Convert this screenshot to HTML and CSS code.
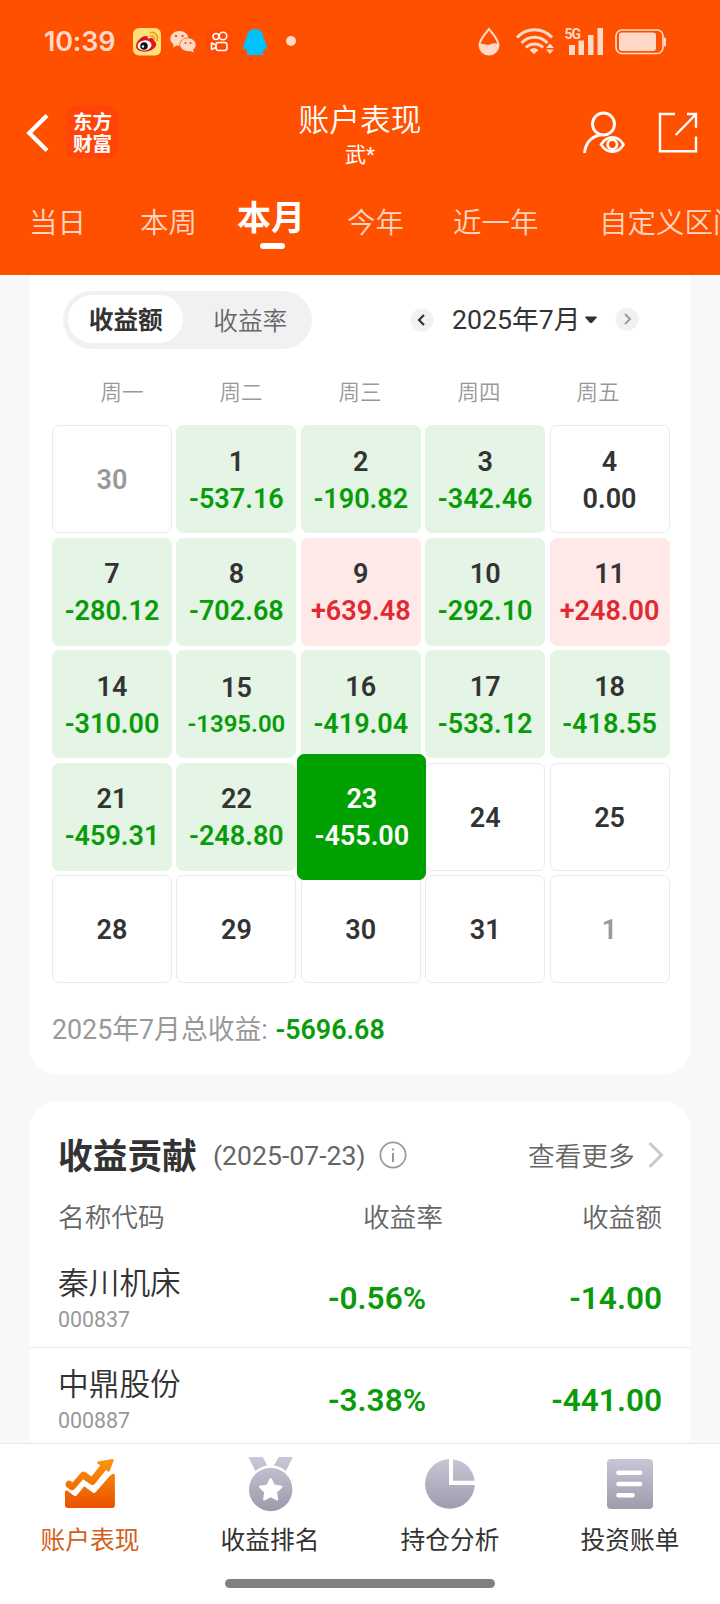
FILE: index.html
```html
<!DOCTYPE html>
<html lang="zh-CN">
<head>
<meta charset="utf-8">
<title>账户表现</title>
<link rel="stylesheet" href="styles.css">
</head>
<body>
<div class="screen">
  <header class="header">
    <div class="status">
      <span class="clock">10:39</span>
      <svg class="status-left" width="180" height="32" viewBox="130 26 180 32">
        <rect x="133" y="28" width="28" height="27.500" rx="6" fill="#ffdf78"/>
        <path d="M136 46c0-5 6-10 10-10 2 0 2 2 2 3 3-2 7-1 6 2 3 1 3 6-1 8-5 4-17 4-17-3z" fill="#e0141e"/>
        <ellipse cx="144.500" cy="45.500" rx="7" ry="5" fill="#fff" transform="rotate(-8 144 45)"/>
        <circle cx="144" cy="46" r="3.800" fill="#111"/><circle cx="143" cy="46.500" r="1.200" fill="#fff"/>
        <path d="M150.500 32.500c5-1 8 3 6.500 8M151 36c2.500-.5 3.500 1.500 3 3.500" fill="none" stroke="#f29a1c" stroke-width="1.700" stroke-linecap="round"/>
        <g fill="#ffd9c8">
          <path d="M179.500 31c5 0 8.500 3 8.700 6.600-5.200 0-9.200 3.600-8.700 8.200-1.200.1-2 0-3-.2l-3.600 2 .8-3c-2-1.500-3.400-3.300-3.400-5.800 0-4.300 4-7.800 9.200-7.800z"/>
          <path d="M188 38.300c4.500 0 7.700 3 7.700 6.500 0 2.100-1 3.600-2.600 4.900l.5 2.700-3.100-1.500c-5.600 1.200-10.400-2-10.400-6.100 0-3.600 3.400-6.500 7.900-6.500z"/>
        </g>
        <g fill="#ff5000"><circle cx="176" cy="36" r="1.200"/><circle cx="182.500" cy="36" r="1.200"/><circle cx="185.500" cy="43" r="1.100"/><circle cx="190.500" cy="43" r="1.100"/></g>
        <rect x="206" y="29" width="26" height="26" rx="6" fill="#ff4a05"/>
        <g fill="none" stroke="#fff" stroke-width="1.600" stroke-linejoin="round"><circle cx="216" cy="36.500" r="3"/><circle cx="223" cy="36" r="3.800"/><rect x="216" y="42.500" width="11" height="8" rx="2.500"/><path d="M216 45l-4.500-2v6.500l4.500-2"/></g>
        <path d="M255 29c5.500 0 8.700 4 8.700 10 2.600 4 3.900 8 3 10.700-.8.300-1.600-.7-2.300-1.700-.3 2-1 3.400-2 4.500l1.500 2.400h-17.600l1.400-2.400c-1-1-1.700-2.500-2-4.500-.7 1-1.500 2-2.200 1.700-1-2.700.3-6.700 2.900-10.700 0-6 3.200-10 8.600-10z" fill="#00c3fb"/>
        <circle cx="291" cy="41" r="5" fill="#ffd9c8"/>
      </svg>
      <svg class="status-right" width="190" height="32" viewBox="476 26 190 32">
        <path d="M489 29c4 5.200 9.500 10.700 9.500 16a9.500 9.500 0 0 1-19 0c0-5.300 5.500-10.800 9.500-16z" fill="none" stroke="#ffd9c8" stroke-width="2"/>
        <path d="M479.500 44c4.500-1.300 7 2 11 .2 2.500-1 5.500-1.500 8-.2.500 13-19 14-19 0z" fill="#ffd9c8"/>
        <g fill="none" stroke="#ffd9c8" stroke-width="3"><path d="M517 37.500c9.700-10.300 25.300-10.300 35 0"/><path d="M521.500 43c7.300-7.700 18.700-7.700 26 0"/><path d="M526 47.500c4.600-4.700 12.400-4.700 17 0"/></g>
        <path d="M534 54l-4.500-4c2.500-2.500 6.500-2.500 9 0zM550 43.500l4 4.500h-8zM550 54l4-4.500h-8z" fill="#ffd9c8"/>
        <g fill="#ffd9c8"><rect x="569" y="45" width="6" height="10"/><rect x="578.500" y="40.500" width="5.500" height="14.500"/><rect x="588" y="35" width="5.500" height="20"/><rect x="597.500" y="28" width="5.500" height="27"/></g>
        <text class="net" x="564.500" y="38.500">5G</text>
        <rect x="616" y="30" width="47" height="23.500" rx="6" fill="none" stroke="#ffd9c8" stroke-width="1.700"/>
        <rect x="619" y="32.500" width="37" height="18.500" rx="3" fill="#ffd9c8"/>
        <path d="M664 37.500c2.600.3 2.600 1.500 2.600 4.500s0 4.200-2.600 4.500z" fill="#ffd9c8"/>
      </svg>
    </div>
    <div class="titlebar">
      <svg class="back" width="26" height="42" viewBox="25 112 26 42"><path d="M47 115.500L29.300 133 47 150.500" fill="none" stroke="#fff" stroke-width="4.300"/></svg>
      <div class="logo">东方<br>财富</div>
      <div class="heading"><h1>账户表现</h1><p>武*</p></div>
      <svg class="actions" width="120" height="46" viewBox="580 109 120 46" fill="none" stroke="#fff" stroke-width="2.900">
        <ellipse cx="603.500" cy="124" rx="11" ry="11"/>
        <path d="M584.500 153c1-11 8-17.500 17.500-18.200"/>
        <path d="M601 144.500c6-9.500 17-9.500 22.500 0-5.500 9.500-16.500 9.500-22.500 0z" stroke-width="2.600"/><circle cx="612.300" cy="144.500" r="4.700" stroke-width="2.600"/>
        <path d="M675 114h-15v37.300h36V136.500M687 114h9v13.700M695.700 114.500l-20 20.500" stroke-width="2.400"/>
      </svg>
    </div>
    <nav class="tabs">
      <span class="tab t1">当日</span><span class="tab t2">本周</span><span class="tab t3 active">本月</span><span class="tab t4">今年</span><span class="tab t5">近一年</span><span class="tab t6">自定义区间</span>
    </nav>
  </header>

  <main class="content">
    <section class="card calendar">
      <div class="controls">
        <div class="toggle"><span class="on">收益额</span><span class="off">收益率</span></div>
        <svg class="prev" width="24" height="24" viewBox="0 0 24 24"><circle cx="12" cy="12" r="11.500" fill="#f1f1f3"/><path d="M14 7l-5 5 5 5" fill="none" stroke="#333" stroke-width="2.200"/></svg>
        <span class="month">2025年7月</span>
        <svg class="caret" width="14" height="8" viewBox="0 0 14 8"><path d="M1.500 1h11L8.500 6Q7 7.500 5.500 6z" fill="#333" stroke="#333" stroke-linejoin="round"/></svg>
        <svg class="next" width="24" height="24" viewBox="0 0 24 24"><circle cx="12" cy="12" r="11.500" fill="#f1f1f3"/><path d="M10 7l5 5-5 5" fill="none" stroke="#999" stroke-width="1.800"/></svg>
      </div>
      <div class="week"><span>周一</span><span>周二</span><span>周三</span><span>周四</span><span>周五</span></div>
      <div class="grid">
        <div class="day mute"><b>30</b></div>
        <div class="day down"><b>1</b><em>-537.16</em></div>
        <div class="day down"><b>2</b><em>-190.82</em></div>
        <div class="day down"><b>3</b><em>-342.46</em></div>
        <div class="day"><b>4</b><em>0.00</em></div>
        <div class="day down"><b>7</b><em>-280.12</em></div>
        <div class="day down"><b>8</b><em>-702.68</em></div>
        <div class="day up"><b>9</b><em>+639.48</em></div>
        <div class="day down"><b>10</b><em>-292.10</em></div>
        <div class="day up"><b>11</b><em>+248.00</em></div>
        <div class="day down"><b>14</b><em>-310.00</em></div>
        <div class="day down"><b>15</b><em class="long">-1395.00</em></div>
        <div class="day down"><b>16</b><em>-419.04</em></div>
        <div class="day down"><b>17</b><em>-533.12</em></div>
        <div class="day down"><b>18</b><em>-418.55</em></div>
        <div class="day down"><b>21</b><em>-459.31</em></div>
        <div class="day down"><b>22</b><em>-248.80</em></div>
        <div class="day selected"><b>23</b><em>-455.00</em></div>
        <div class="day"><b>24</b></div>
        <div class="day"><b>25</b></div>
        <div class="day"><b>28</b></div>
        <div class="day"><b>29</b></div>
        <div class="day"><b>30</b></div>
        <div class="day"><b>31</b></div>
        <div class="day mute"><b>1</b></div>
      </div>
      <div class="total">2025年7月总收益: <b>-5696.68</b></div>
    </section>

    <section class="card contrib">
      <div class="contrib-head">
        <h2>收益贡献</h2>
        <span class="date">(2025-07-23)</span>
        <svg class="info" width="28" height="28" viewBox="0 0 28 28"><circle cx="14" cy="14" r="12.600" fill="none" stroke="#999" stroke-width="1.700"/><path d="M14 12v9M14 7.500v2" stroke="#999" stroke-width="2"/></svg>
        <span class="more">查看更多</span>
        <svg class="chev" width="18" height="28" viewBox="0 0 18 28"><path d="M2.500 2L14.500 14 2.500 26" fill="none" stroke="#c8c8c8" stroke-width="3"/></svg>
      </div>
      <div class="row cols"><span>名称代码</span><span class="rate">收益率</span><span class="amt">收益额</span></div>
      <div class="row item"><div class="name"><strong>秦川机床</strong><small>000837</small></div><span class="rate">-0.56%</span><span class="amt">-14.00</span></div>
      <div class="row item"><div class="name"><strong>中鼎股份</strong><small>000887</small></div><span class="rate">-3.38%</span><span class="amt">-441.00</span></div>
    </section>
  </main>

  <footer class="dock">
    <div class="dock-items">
      <div class="dock-item current">
        <svg width="60" height="58" viewBox="60 1454 60 58"><defs>
          <linearGradient id="gr" gradientUnits="userSpaceOnUse" x1="0" y1="1457" x2="0" y2="1511"><stop offset="0" stop-color="#cac8d8"/><stop offset="1" stop-color="#9b99ab"/></linearGradient>
          <linearGradient id="og" gradientUnits="userSpaceOnUse" x1="0" y1="1458" x2="0" y2="1508"><stop offset="0" stop-color="#fa9a0b"/><stop offset="1" stop-color="#ea5000"/></linearGradient></defs>
          <path d="M65 1492.500q0-3.500 2.500-1.700l6.500 5q1.600 1 2.600-.3l7.700-9.300 8.300 6.300q1.800 1 3.200-.5l14.200-16.300q4.900-4 4.900 0V1505q0 3-3 3H68q-3 0-3-3z" fill="url(#og)"/>
          <path d="M112.500 1459l-14.500 2.600q-1.600.4-.6 1.600l2.800 2.400-8.700 10.900-5.700-4.300q-2.800-1.600-5 .6l-8.200 9.700-1.500-1.300q-2.500-1.500-4.700.7-2 2.800.2 5l4 3q2 1.200 3.800-.7l8.700-10 8 5.500q1.900 1 3.600-.8l11.500-14.200 1.700 1.700q1.200.7 1.800-.5l4-10.300q.2-1.500-1.200-1.600z" fill="url(#og)"/></svg>
        <span>账户表现</span>
      </div>
      <div class="dock-item">
        <svg width="60" height="58" viewBox="240 1454 60 58"><g fill="url(#gr)"><path d="M249.500 1457h12q1.200 0 1.800 1l4 7.500q-7 1-11.800 5.500l-6.500-12.500q-.6-1.500.5-1.500zM291.800 1457h-12q-1.200 0-1.800 1l-4 7.500q7 1 11.800 5.500l6.500-12.500q.6-1.500-.5-1.500z"/><circle cx="270.700" cy="1489.500" r="21.700"/></g><path d="M270.700 1479l3.300 6.500 7.500 1.200-5.400 5.300 1.200 7.500-6.600-3.500-6.600 3.500 1.200-7.500-5.400-5.300 7.500-1.200z" fill="#fff" stroke="#fff" stroke-width="2" stroke-linejoin="round"/></svg>
        <span>收益排名</span>
      </div>
      <div class="dock-item">
        <svg width="60" height="58" viewBox="420 1454 60 58"><g fill="url(#gr)"><path d="M449 1459v26h25.800A24.900 24.900 0 1 1 449 1459z"/><path d="M453 1459.500a23.500 23.500 0 0 1 21.500 21.300H453z"/></g></svg>
        <span>持仓分析</span>
      </div>
      <div class="dock-item">
        <svg width="60" height="58" viewBox="600 1454 60 58"><rect x="607" y="1459" width="46" height="50" rx="4" fill="url(#gr)"/><path d="M618.500 1472.700h21.500M618.500 1484h21.500M618.500 1495.300h14" stroke="#fff" stroke-width="4.600" stroke-linecap="round"/></svg>
        <span>投资账单</span>
      </div>
    </div>
    <div class="home-bar"></div>
  </footer>
</div>
</body>
</html>
```

FILE: styles.css
```css
* { box-sizing: border-box; margin: 0; padding: 0; }
body { font-family: Roboto, "Noto Sans CJK SC", sans-serif; color: #333; background: #f7f8fa; }
svg { display: block; flex: none; }
em, i { font-style: normal; }
.screen { width: 720px; height: 1604px; display: flex; flex-direction: column; overflow: hidden; }

.header { height: 275px; background: #ff5000; color: #fff; flex: none; }
.status { height: 84px; padding: 26px 54px 0 44px; display: flex; }
.clock { width: 86px; font: 600 27px/31px Inter, sans-serif; letter-spacing: -.2px; color: #ffd9c8; }
.status-right { margin-left: 166px; }
.net { font: 700 14px Roboto, sans-serif; fill: #ffd9c8; letter-spacing: -1px; }
.titlebar { height: 98px; display: flex; padding-left: 25px; }
.back { margin-top: 28px; }
.logo { width: 53px; height: 53px; margin: 21px 0 0 15px; padding-top: 5px; border-radius: 11px; background: #ff4608; font: 700 19.500px/22px "Noto Sans CJK SC", sans-serif; text-align: center; }
.heading { width: 200px; margin: 17px 0 0 141px; text-align: center; }
.heading h1 { font-size: 30.700px; font-weight: 350; line-height: 39px; }
.heading p { font-size: 21px; font-weight: 400; line-height: 31px; }
.actions { margin: 25px 0 0 119.500px; }
.tabs { height: 80px; display: flex; white-space: nowrap; overflow: hidden; }
.tab { flex: none; font-size: 28.500px; font-weight: 350; line-height: 83px; color: #ffd5c2; }
.t1 { width: 111px; margin-left: 29px; }
.t2 { width: 97px; }
.t3 { width: 110px; }
.t4 { width: 106px; }
.t5 { width: 146px; }
.tab.active { display: flex; flex-direction: column; font-size: 34px; font-weight: 700; line-height: 40px; padding-top: 16px; color: #fff; }
.tab.active::after { content: ""; width: 25px; height: 6px; border-radius: 3px; background: #fff; margin: 5px 0 0 23px; }

.content { height: 1168px; flex: none; padding: 0 29px; overflow: hidden; }
.card { background: #fff; border-radius: 28px; }
.calendar { height: 799px; border-radius: 0 0 28px 28px; padding: 16px 21px 0 23px; }
.controls { height: 58px; display: flex; align-items: center; padding-left: 11px; }
.toggle { width: 249px; height: 58px; border-radius: 29px; background: #f1f1f3; padding: 4px 0 0 5px; display: flex; font-size: 24.700px; line-height: 52px; text-align: center; }
.on { width: 116px; height: 48px; border-radius: 24px; background: #fff; font-weight: 700; padding-left: 1px; }
.off { width: 131px; padding-left: 6px; font-weight: 350; color: #666; line-height: 54px; }
.prev { margin-left: 98px; }
.month { width: 126px; margin-left: 18px; font-size: 26.700px; line-height: 40px; font-weight: 375; white-space: nowrap; }
.caret { margin-left: 6px; }
.next { margin-left: 17px; margin-top: -2px; }
.week { display: grid; grid-template-columns: repeat(5, 119px); margin-left: 10.500px; padding-top: 28px; height: 76px; font-size: 21.500px; font-weight: 350; line-height: 32px; color: #999; text-align: center; }
.grid { display: grid; grid-template-columns: repeat(5, 120px); grid-auto-rows: 108px; gap: 4.500px 4.400px; }
.day { padding-top: 3px; border: 1px solid #ebebeb; border-radius: 7px; display: flex; flex-direction: column; align-items: center; justify-content: center; font-size: 27px; font-weight: 600; }
.day b { font-weight: inherit; line-height: 37px; }
.day em { line-height: 37px; }
.day .long { font-size: 24px; line-height: 35px; }
.day.down { background: #e4f4e5; border-color: #e4f4e5; }
.day.up { background: #ffe8e8; border-color: #ffe8e8; }
.down em { color: #0a9b0a; }
.up em { color: #e02a30; }
.mute { color: #999; }
.day.selected { background: #00a000; border-color: #00a000; color: #fff; margin: -9px -5.200px -9px -4px; padding-left: 1px; z-index: 1; }
.total { margin-top: 27px; font-size: 26.800px; line-height: 40px; color: #999; font-weight: 375; white-space: nowrap; }
.total b { font-weight: 600; margin-left: 1px; color: #0a9b0a; }

.contrib { margin-top: 27px; height: 356px; }
.contrib-head { height: 94px; padding: 14px 26px 0 29px; display: flex; align-items: center; color: #666; }
.contrib-head h2 { width: 155px; font-size: 34.700px; font-weight: 700; color: #333; line-height: 50px; padding-top: 3px; white-space: nowrap; }
.date { width: 166px; font-size: 26.600px; font-weight: 375; }
.more { margin: -2px 0 0 121px; width: 107px; font-size: 26.700px; font-weight: 350; white-space: nowrap; }
.chev { margin-left: 12px; }
.row { padding: 0 29px; display: grid; grid-template-columns: 1fr 220px 219px; }
.cols { height: 51px; font-size: 26.700px; line-height: 47px; font-weight: 350; color: #666; }
.rate, .amt { text-align: right; }
.item { height: 101px; }
.item + .item { border-top: 1px solid #e8e8e8; }
.item .rate, .item .amt { font-size: 31.600px; font-weight: 600; color: #0a9b0a; line-height: 105px; }
.item .rate { padding-right: 17px; }
.name { display: flex; flex-direction: column; padding-top: 17px; }
.item + .item .name { padding-top: 16px; }
.name strong { font-size: 30.700px; font-weight: 350; line-height: 42px; }
.name small { font-size: 21.400px; line-height: 30px; color: #999; font-weight: 375; }

.dock { height: 161px; flex: none; background: #fff; border-top: 1px solid #e8e8e8; }
.dock-items { height: 135px; display: grid; grid-template-columns: repeat(4, 180px); padding-top: 10px; }
.dock-item { display: flex; flex-direction: column; align-items: center; }
.dock-item span { margin-top: 11px; font-size: 24.700px; line-height: 36px; font-weight: 375; }
.current span { color: #d2601c; }
.home-bar { width: 270px; height: 9px; border-radius: 5px; background: #808080; margin: 0 auto; }
```
